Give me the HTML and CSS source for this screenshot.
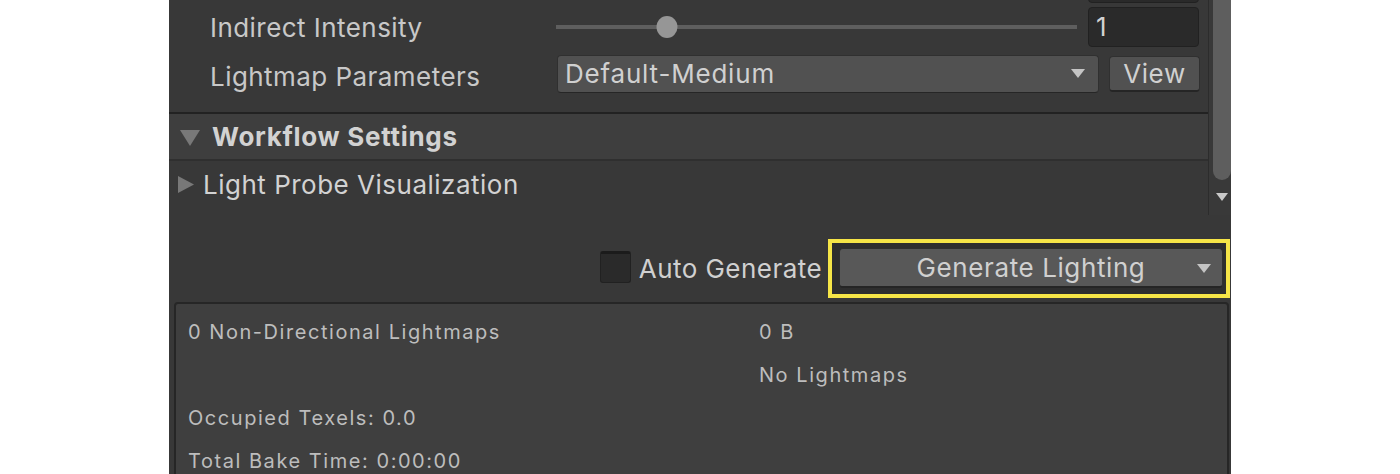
FILE: index.html
```html
<!DOCTYPE html>
<html lang="en">
<head>
<meta charset="utf-8">
<title>Lighting</title>
<link rel="stylesheet" href="styles.css">
</head>
<body>
<div class="panel">
  <div class="scrollview">
    <div class="content">
      <div class="row row-partial">
        <div class="field"></div>
      </div>
      <div class="row row-slider">
        <span class="label">Indirect Intensity</span>
        <div class="ctrl">
          <div class="slider">
            <div class="track"></div>
            <div class="knob" style="left: 21.3%"></div>
          </div>
          <div class="field">1</div>
        </div>
      </div>
      <div class="row row-dropdown">
        <span class="label label-low">Lightmap Parameters</span>
        <div class="ctrl">
          <div class="dropdown">
            <span>Default-Medium</span>
            <svg class="caret" width="14" height="9" viewBox="0 0 14 9"><path d="M0 0H14L7 9Z" fill="#c4c4c4"/></svg>
          </div>
          <div class="btn btn-view">View</div>
        </div>
      </div>
      <div class="section-header">
        <svg class="tri-down" width="20" height="16" viewBox="0 0 20 16"><path d="M0 0H20L10 16Z" fill="#787878"/></svg>
        <span>Workflow Settings</span>
      </div>
      <div class="foldout">
        <svg class="tri-right" width="16" height="17" viewBox="0 0 16 17"><path d="M0 0L16 8.5L0 17Z" fill="#787878"/></svg>
        <span>Light Probe Visualization</span>
      </div>
    </div>
    <div class="scrollbar">
      <div class="sb-thumb"></div>
      <svg class="sb-arrow" width="12" height="8" viewBox="0 0 12 8"><path d="M0 0H12L6 8Z" fill="#c8c8c8"/></svg>
    </div>
  </div>

  <div class="actions">
    <div class="checkbox"></div>
    <span class="check-label">Auto Generate</span>
    <div class="highlight">
      <div class="btn btn-generate">
        <span class="gen-text">Generate Lighting</span>
        <svg class="caret" width="14" height="9" viewBox="0 0 14 9"><path d="M0 0H14L7 9Z" fill="#c4c4c4"/></svg>
      </div>
    </div>
  </div>

  <div class="stats">
    <span>0 Non-Directional Lightmaps</span>
    <span>0 B</span>
    <span></span>
    <span>No Lightmaps</span>
    <span>Occupied Texels: 0.0</span>
    <span></span>
    <span>Total Bake Time: 0:00:00</span>
    <span></span>
  </div>
</div>
</body>
</html>
```
FILE: styles.css
```css
html, body {
  margin: 0;
  padding: 0;
  background: #ffffff;
}
body {
  font-family: Inter, "Noto Sans", sans-serif;
  color: #c4c4c4;
}
.panel {
  margin-left: 169px;
  width: 1062px;
  height: 474px;
  background: #383838;
  overflow: hidden;
}
.scrollview {
  display: flex;
  height: 215px;
}
.content {
  flex: 1;
  display: flex;
  flex-direction: column;
}
.scrollbar {
  width: 22px;
  border-left: 1px solid #2c2c2c;
  background: #393939;
  display: flex;
  flex-direction: column;
}
.sb-thumb {
  margin-left: 4px;
  width: 18px;
  height: 180px;
  background: #5e5e5e;
  border-radius: 0 0 9px 9px;
}
.sb-arrow {
  margin: 13px 0 0 7px;
}

.row {
  display: flex;
  align-items: center;
  padding-left: 41px;
  padding-right: 8px;
}
.row-partial {
  height: 3px;
  justify-content: flex-end;
  align-items: flex-end;
  overflow: hidden;
}
.row-partial .field {
  height: 40px;
  flex: none;
}
.row-slider {
  height: 48px;
}
.row-dropdown {
  height: 45px;
}
.label {
  width: 346px;
  flex: none;
  font-size: 26px;
  letter-spacing: 0.45px;
  color: #c8c8c8;
}
.label-low {
  padding-top: 5px;
}
.ctrl {
  flex: 1;
  display: flex;
  align-items: center;
}
.slider {
  flex: 1;
  position: relative;
  height: 22px;
  display: flex;
  align-items: center;
  margin-right: 11px;
}
.track {
  flex: 1;
  height: 4px;
  background: #5e5e5e;
}
.knob {
  position: absolute;
  top: 0;
  width: 21px;
  height: 22px;
  border-radius: 50%;
  background: #969696;
  transform: translateX(-50%);
}
.field {
  width: 109px;
  height: 38px;
  box-sizing: content-box;
  background: #2a2a2a;
  border: 1px solid #212121;
  border-radius: 4px;
  font-size: 26px;
  line-height: 38px;
  text-indent: 7px;
  color: #d2d2d2;
  margin-right: 1px;
}
.dropdown {
  flex: 1;
  height: 36px;
  background: #515151;
  border: 1px solid #303030;
  border-bottom-color: #262626;
  border-radius: 4px;
  display: flex;
  align-items: center;
  justify-content: space-between;
  padding: 0 13px 0 7px;
  font-size: 26px;
  letter-spacing: 0.8px;
  color: #d0d0d0;
  margin-left: 1px;
}
.btn {
  background: #585858;
  border: 1px solid #303030;
  border-bottom: 2px solid #252525;
  border-radius: 4px;
  color: #d0d0d0;
  font-size: 26px;
  display: flex;
  align-items: center;
}
.btn-view {
  margin-left: 10px;
  width: 89px;
  height: 33px;
  justify-content: center;
  background: #515151;
  letter-spacing: 0.6px;
}
.section-header {
  margin-top: 16px;
  height: 45px;
  border-top: 2px solid #222222;
  border-bottom: 2px solid #2f2f2f;
  background: #3e3e3e;
  display: flex;
  align-items: center;
  font-size: 26px;
  font-weight: 700;
  color: #d2d2d2;
}
.tri-down {
  margin: 2px 12px 0 11px;
}
.section-header span {
  letter-spacing: 0.7px;
}
.foldout {
  height: 46px;
  display: flex;
  align-items: center;
  font-size: 26px;
  letter-spacing: 0.5px;
  color: #d2d2d2;
}
.tri-right {
  margin: 0 9px 0 9px;
}

.actions {
  display: flex;
  justify-content: flex-end;
  align-items: center;
  padding: 24px 1px 0 0;
  height: 59px;
}
.checkbox {
  width: 29px;
  height: 28px;
  background: #2a2a2a;
  border: 1px solid #212121;
  border-top: 3px solid #1b1b1b;
  border-radius: 3px;
  margin-right: 8px;
  margin-top: -3px;
}
.check-label {
  font-size: 26px;
  letter-spacing: 0.45px;
  color: #d0d0d0;
  margin-right: 6px;
}
.highlight {
  border: 4px solid #f6e547;
  background: #2e2e2e;
  padding: 5px 3px 6px 7px;
}
.btn-generate {
  width: 382px;
  height: 37px;
  position: relative;
  justify-content: center;
  letter-spacing: 0.6px;
}
.btn-generate .caret {
  position: absolute;
  right: 11px;
  top: 15px;
}

.stats {
  margin: 4px 2px 0 5px;
  height: 200px;
  background: #3f3f3f;
  border: 2px solid #262626;
  border-radius: 4px 4px 0 0;
  display: grid;
  grid-template-columns: 571px 1fr;
  grid-auto-rows: 43px;
  align-items: center;
  padding: 6px 0 0 12px;
  font-size: 20px;
  letter-spacing: 1.55px;
  color: #bdbdbd;
}
```
